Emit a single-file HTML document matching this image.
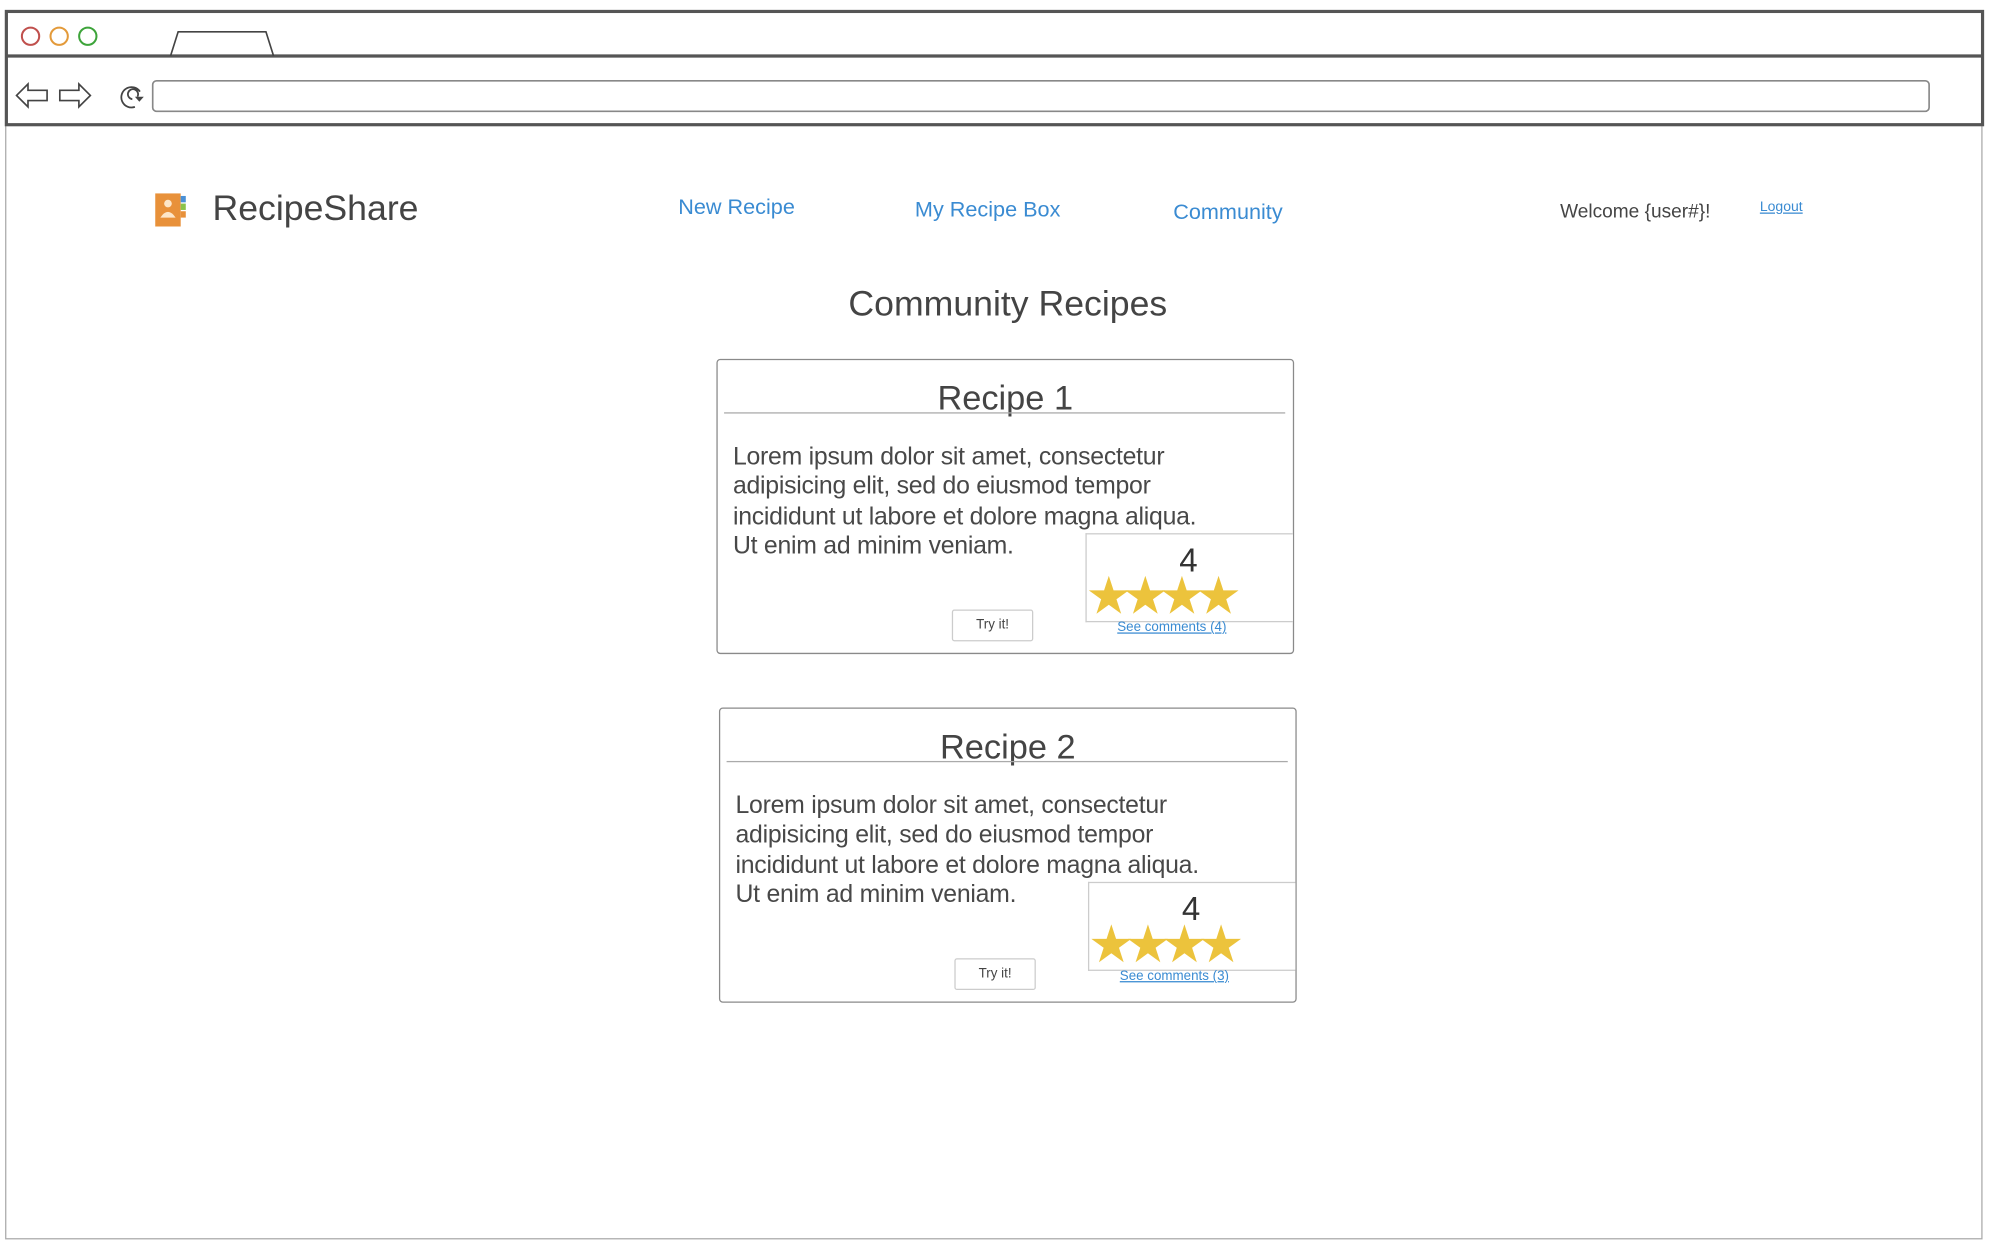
<!DOCTYPE html>
<html><head><meta charset="utf-8"><style>
html,body{margin:0;padding:0;background:#fff;width:1994px;height:1248px;overflow:hidden}
#w{position:absolute;left:0;top:0;width:1562px;height:980px;transform:scale(1.2725);transform-origin:0 0;font-family:"Liberation Sans",Arial,sans-serif}
.a{position:absolute}
.blue{color:#3a8bd2}
.card{position:absolute;width:454px;height:232px;border:1.6px solid #8a8a8a;border-radius:3px;box-sizing:border-box}
.card .t{position:absolute;left:0;right:0;top:15px;text-align:center;font-size:27px;color:#444}
.card .ln{position:absolute;left:5px;right:6px;top:41px;border-top:1.5px solid #aaa}
.card .p{position:absolute;left:12px;top:65px;font-size:19.5px;line-height:23.3px;color:#484848;width:440px;white-space:nowrap;letter-spacing:-0.2px}
.card .r{position:absolute;left:289px;top:136px;width:163px;height:70px;border:1px solid #ccc;border-right:none;background:#fff;box-sizing:border-box}
.card .r .n{position:absolute;left:0;width:160px;text-align:center;top:5px;font-size:26px;color:#333}
.card .r .s{position:absolute;left:-1px;top:28px;font-size:41px;line-height:40px;color:#ecc33c;letter-spacing:-8px}
.card .c{position:absolute;left:314px;top:204px;font-size:10.5px;text-decoration:underline;color:#3a8bd2}
.card .b{position:absolute;left:184px;top:196px;width:64px;height:25px;border:1px solid #ccc;border-radius:2px;box-sizing:border-box;font-size:10.5px;text-align:center;line-height:22px;color:#444}
</style></head><body><div id="w">
<svg class="a" style="left:0;top:0" width="1562" height="980">
<rect x="4.5" y="8.5" width="1553" height="965" fill="none" stroke="#aaa" stroke-width="1"/>
<rect x="5" y="9" width="1553" height="89" fill="#fff" stroke="#555" stroke-width="2.5"/>
<line x1="5" y1="44" x2="1558" y2="44" stroke="#555" stroke-width="2.5"/>
<circle cx="24" cy="28.5" r="6.8" fill="none" stroke="#c0504d" stroke-width="1.6"/>
<circle cx="46.5" cy="28.5" r="6.8" fill="none" stroke="#e39a3a" stroke-width="1.6"/>
<circle cx="69" cy="28.5" r="6.8" fill="none" stroke="#3da43a" stroke-width="1.6"/>
<path d="M134 44 L140 25 H209 L215 44" fill="none" stroke="#444" stroke-width="1.3"/>
<rect x="120" y="63.5" width="1396" height="24" rx="3" fill="none" stroke="#888" stroke-width="1.3"/>
<path d="M13 75 L22 66 V71 H37 V79 H22 V84 Z" fill="none" stroke="#444" stroke-width="1.3"/>
<path d="M71 75 L62 66 V71 H47 V79 H62 V84 Z" fill="none" stroke="#444" stroke-width="1.3"/>
<path d="M110 72 A8 8 0 1 0 106 84 M104 78 A4 4 0 1 1 108 76" fill="none" stroke="#444" stroke-width="1.4"/>
<path d="M106 76 H113 L109.5 80 Z" fill="#444"/>
<rect x="122" y="152" width="20" height="26" fill="#e8913a"/>
<rect x="142" y="154" width="4" height="5" fill="#4a90d6"/><rect x="142" y="160" width="4" height="5" fill="#8bc34a"/><rect x="142" y="166" width="4" height="5" fill="#e8913a"/>
<circle cx="132" cy="160" r="3" fill="#fde6c8"/><path d="M126 171 Q132 162 138 171 Z" fill="#fde6c8"/>
</svg>
<div class="a" style="left:167px;top:148px;font-size:28px;color:#444">RecipeShare</div>
<div class="a blue" style="left:533px;top:153px;font-size:17px">New Recipe</div>
<div class="a blue" style="left:719px;top:155px;font-size:17px">My Recipe Box</div>
<div class="a blue" style="left:922px;top:157px;font-size:17px">Community</div>
<div class="a" style="left:1226px;top:158px;font-size:15px;color:#444">Welcome {user#}!</div>
<div class="a blue" style="left:1383px;top:157px;font-size:11px;text-decoration:underline">Logout</div>
<div class="a" style="left:0;width:1584px;text-align:center;top:223px;font-size:28px;color:#444">Community Recipes</div>
<div class="card" style="left:563px;top:282px">
<div class="t">Recipe 1</div><div class="ln"></div>
<div class="p">Lorem ipsum dolor sit amet, consectetur<br>adipisicing elit, sed do eiusmod tempor<br>incididunt ut labore et dolore magna aliqua.<br>Ut enim ad minim veniam.</div>
<div class="r"><div class="n">4</div><div class="s">★★★★</div></div>
<div class="c">See comments (4)</div>
<div class="b">Try it!</div>
</div>
<div class="card" style="left:565px;top:556px">
<div class="t">Recipe 2</div><div class="ln"></div>
<div class="p">Lorem ipsum dolor sit amet, consectetur<br>adipisicing elit, sed do eiusmod tempor<br>incididunt ut labore et dolore magna aliqua.<br>Ut enim ad minim veniam.</div>
<div class="r"><div class="n">4</div><div class="s">★★★★</div></div>
<div class="c">See comments (3)</div>
<div class="b">Try it!</div>
</div>
</div></body></html>
